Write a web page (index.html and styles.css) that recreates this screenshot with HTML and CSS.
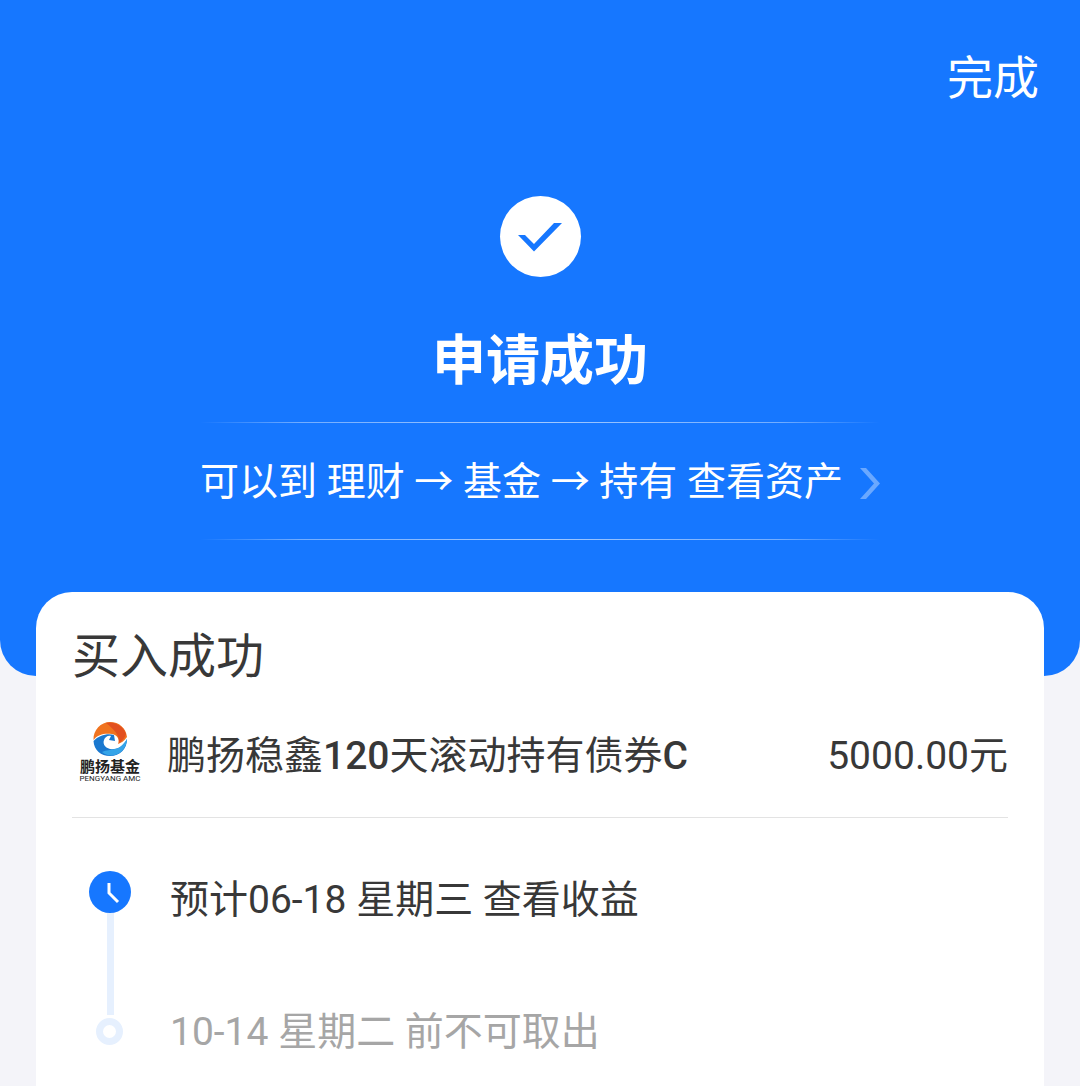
FILE: index.html
```html
<!DOCTYPE html>
<html>
<head>
  <meta charset="UTF-8">
  <title>申请成功</title>
  <link rel="stylesheet" href="styles.css">
</head>
<body>
  <div class="page">
    <!-- Blue header -->
    <div class="header">
      <div class="done">完成</div>
      <div class="check-circle">
        <svg class="check" width="44" height="29" viewBox="0 0 44 29">
          <path d="M0 12 H7 L16 21 L36 0 H44 L16 28.5 Z" fill="#1677ff"/>
        </svg>
      </div>
      <h1 class="title">申请成功</h1>
      <div class="divider"></div>
      <div class="hint">
        <span>可以到 理财 → 基金 → 持有 查看资产</span>
        <svg class="hint-arrow" width="20" height="31" viewBox="0 0 20 31">
          <path d="M0 0 H6 L20 15.5 L6 31 H0 L14 15.5 Z" fill="#6aa8ff"/>
        </svg>
      </div>
      <div class="divider"></div>
    </div>

    <!-- Result card -->
    <div class="card">
      <div class="card-title">买入成功</div>
      <div class="fund-row">
        <div class="logo">
          <svg width="34" height="34" viewBox="0 0 34 34">
            <path d="M0.5 18 C0 8 8 0 17 0 C26 0 33 6 34 15 C31 19 28 21 25 22 C27 17 24 13 19 12 C12 11 5 12 0.5 18 Z" fill="#f0731f"/>
            <path d="M13 1 C20 -1 30 3 33 12 C32 16 29 19 26 21 C27 14 22 8 13 1 Z" fill="#e2501f"/>
            <path d="M0.5 19 C1 28 8 34 17 34 C27 34 34 27 34 17 C31 23 26 27 21 27 C14 28 9 23 11 18 C12 15 15 13 18 14 L16 18 L22 19 L21 13 C15 11 6 13 0.5 19 Z" fill="#1a78cf"/>
            <path d="M22 27 C27 26 31 22 34 17 C34 24 29 31 22 33 C17 34 12 33 9 30 C13 28 18 28 22 27 Z" fill="#35a4e8"/>
          </svg>
          <div class="logo-cn">鹏扬基金</div>
          <div class="logo-en">PENGYANG AMC</div>
        </div>
        <div class="fund-name">鹏扬稳鑫<b>120</b>天滚动持有债券<b>C</b></div>
        <div class="fund-amount">5000.00元</div>
      </div>
      <div class="steps">
        <div class="step">
          <div class="step-mark">
            <div class="clock">
              <svg width="42" height="42" viewBox="0 0 42 42">
                <path d="M20 12 V22 L29 31" fill="none" stroke="#fff" stroke-width="3"/>
              </svg>
            </div>
            <div class="step-line"></div>
          </div>
          <div class="step-text">预计06-18 星期三 查看收益</div>
        </div>
        <div class="step">
          <div class="step-mark">
            <div class="ring"></div>
          </div>
          <div class="step-text muted">10-14 星期二 前不可取出</div>
        </div>
      </div>
    </div>
  </div>
</body>
</html>
```

FILE: styles.css
```css
html, body {
  margin: 0;
  padding: 0;
}
body {
  font-family: Roboto, "Noto Sans CJK SC", sans-serif;
  background-color: #f4f4f9;
}
.page {
  height: 1086px;
  overflow: hidden;
}
.header {
  height: 676px;
  box-sizing: border-box;
  background-color: #1677ff;
  border-radius: 0 0 36px 36px;
  color: white;
  display: flex;
  flex-direction: column;
  align-items: center;
  padding-top: 48px;
}
.done {
  align-self: flex-end;
  margin-right: 41px;
  font-size: 46px;
  line-height: 60px;
}
.check-circle {
  width: 81px;
  height: 81px;
  margin-top: 88px;
  border-radius: 50%;
  background: white;
  display: flex;
  align-items: center;
  justify-content: center;
}
.check {
  margin-top: 1px;
}
.title {
  margin: 49px 0 0;
  font-size: 54px;
  line-height: 72px;
  font-weight: bold;
}
.divider {
  width: 680px;
  height: 1px;
  background: linear-gradient(to right, rgba(255,255,255,0), rgba(255,255,255,0.4) 15%, rgba(255,255,255,0.6) 50%, rgba(255,255,255,0.4) 85%, rgba(255,255,255,0));
}
.title + .divider {
  margin-top: 24px;
}
.hint {
  height: 116px;
  display: flex;
  align-items: center;
  justify-content: center;
  gap: 17px;
  font-size: 39px;
  white-space: nowrap;
}
.hint span {
  margin-bottom: 7px;
}
.hint-arrow {
  margin-top: 5px;
}
.card {
  box-sizing: border-box;
  height: 600px;
  margin: -84px 36px 0;
  padding: 36px 36px 0;
  position: relative;
  background: white;
  border-radius: 36px 36px 0 0;
  color: #383838;
}
.card-title {
  font-size: 48px;
  line-height: 58px;
}
.fund-row {
  height: 132px;
  box-sizing: border-box;
  border-bottom: 1px solid #e3e3e3;
  display: flex;
  align-items: center;
  font-size: 39px;
}
.logo {
  width: 76px;
  margin-right: 19px;
  margin-top: 2px;
  display: flex;
  flex-direction: column;
  align-items: center;
  color: #222;
}
.logo-cn {
  font-size: 15px;
  line-height: 15px;
  font-weight: bold;
  margin-top: 4px;
}
.logo-en {
  font-size: 8px;
  line-height: 8px;
  white-space: nowrap;
}
.fund-name b {
  font-weight: 500;
}
.fund-amount {
  margin-left: auto;
}
.steps {
  padding: 33px 0 0 17px;
}
.step {
  display: flex;
  height: 132px;
}
.step-mark {
  width: 42px;
  margin-right: 39px;
  display: flex;
  flex-direction: column;
  align-items: center;
  padding-top: 20px;
}
.clock {
  width: 42px;
  height: 42px;
  border-radius: 50%;
  background-color: #1677ff;
  flex-shrink: 0;
}
.step-line {
  width: 7px;
  height: 102px;
  flex-shrink: 0;
  background-color: #e6f0fe;
}
.ring {
  width: 27px;
  height: 27px;
  margin-top: 15px;
  margin-right: 2px;
  border: 7px solid #e6f0fe;
  box-sizing: border-box;
  border-radius: 50%;
}
.step-text {
  font-size: 39px;
  line-height: 50px;
  padding-top: 24px;
}
.muted {
  color: #a6a6a6;
}
```
